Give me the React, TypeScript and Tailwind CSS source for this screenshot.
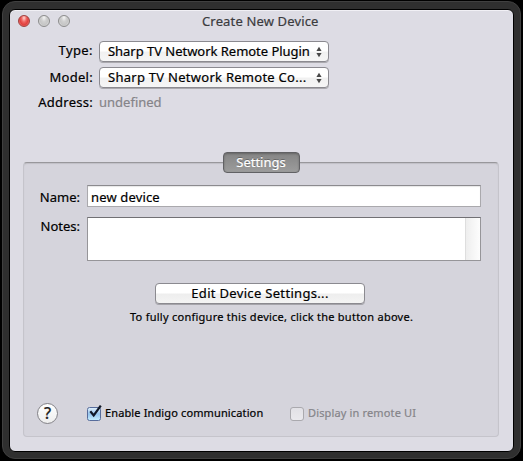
import React from "react";

function Popup({ children }: { children: React.ReactNode }) {
  return (
    <button className="flex h-[21px] w-[230px] items-center justify-between rounded-[4px] border border-[#8b8a90] bg-linear-to-b from-white from-45% via-[#f1f1f1] via-55% to-[#f6f6f6] pr-[6px] pl-2 shadow-[0_1px_0_#aaa9ae]">
      {children}
      <svg width="6" height="12" viewBox="0 0 6 12" fill="#484848">
        <path d="M3 .8 5.6 5H.4zM3 11.2 5.6 7H.4z" />
      </svg>
    </button>
  );
}

function Light({ red = false }: { red?: boolean }) {
  return (
    <span
      className={
        red
          ? "h-3 w-3 rounded-full border border-[#a0413f] bg-[radial-gradient(ellipse_at_50%_20%,#ffd6d2_0%,#ef6561_35%,#e0403e_60%,#ff9c92_100%)]"
          : "h-3 w-3 rounded-full border border-[#8c8c8c] bg-[radial-gradient(ellipse_at_50%_15%,#f5f5f5_0%,#d0d0d0_35%,#c6c6c6_60%,#ececec_100%)]"
      }
    />
  );
}

export default function App() {
  return (
    <div className="h-[461px] w-[523px] overflow-hidden bg-black px-[2px] pt-px pb-[2px] font-['Noto_Sans','Open_Sans',sans-serif] text-[13px] leading-4 whitespace-nowrap text-black [-webkit-text-stroke:0.2px]">
      <div className="h-[458px] w-[519px] rounded-[13px] border border-[#404040] bg-[#2f2f2f] pt-[7px] pl-[6px]">
        <div className="h-[443px] w-[505px] rounded-[6px] border border-black bg-[#dddce4] shadow-[inset_0_1px_0_#f1f0f5]">
          <header className="flex h-[31px] items-start pt-[5px] pl-2">
            <div className="flex w-[176px] gap-2">
              <Light red />
              <Light />
              <Light />
            </div>
            <h1 className="-mt-[2px] pl-[8px] tracking-[0.15px] text-[#3b3b3e]">Create New Device</h1>
          </header>

          <section className="grid h-[111px] grid-cols-[83px_1fr] content-start gap-x-[6px] gap-y-[5px]">
            <div className="text-right leading-[19px] tracking-[0.4px]">Type:</div>
            <Popup><span className="-mt-[2px] tracking-[-0.03px]">Sharp TV Network Remote Plugin</span></Popup>
            <div className="pt-px text-right leading-[19px] tracking-[0.3px]">Model:</div>
            <Popup><span className="-mt-[2px] tracking-[0.27px]">Sharp TV Network Remote Co...</span></Popup>
            <div className="text-right leading-[19px] tracking-[0.25px]">Address:</div>
            <div className="leading-[19px] text-[#858489]">undefined</div>
          </section>

          <main className="ml-[13px] flex h-[285px] w-[476px] flex-col">
            <div className="z-10 -mb-[11px] flex h-[21px] w-[77px] items-center justify-center self-center rounded-[4px] border border-[#616164] bg-linear-to-b from-[#858585] to-[#9c9c9c] pb-px text-white shadow-[inset_0_1px_2px_#666] [text-shadow:0_-1px_0_#666]">
              Settings
            </div>
            <div className="h-[275px] rounded-[4px] border border-[#c5c4cb] border-t-[#98979b] bg-[#d5d4dc] pt-[22px] shadow-[inset_0_1px_1px_#c0bfc6]">
              <div className="flex h-[32px] items-start">
                <label className="w-[56px] pt-[4px] text-right">Name:</label>
                <div className="ml-[7px] h-[22px] w-[394px] border border-[#aaa9ad] border-t-[#8b8a8e] bg-white pt-[3px] pl-[3px] tracking-[0.15px] shadow-[inset_0_1px_1px_#e7e7e7]">new device</div>
              </div>
              <div className="flex h-[66px] items-start">
                <label className="w-[56px] pt-px text-right">Notes:</label>
                <div className="ml-[7px] flex h-[44px] w-[394px] justify-end border border-[#969599] border-t-[#717074] bg-white">
                  <div className="w-[15px] border-l border-[#dedede] bg-linear-to-r from-[#eeeeee] to-[#fdfdfd]" />
                </div>
              </div>
              <button className="ml-[131px] flex h-[21px] w-[210px] items-center justify-center rounded-[4px] border border-[#8b8a90] bg-linear-to-b from-white from-45% via-[#eeeeee] via-55% to-[#f4f4f4] pb-[2px] tracking-[0.32px] shadow-[0_1px_0_#a5a4aa]">
                Edit Device Settings...
              </button>
              <p className="mt-[5px] ml-[106px] text-[11px] tracking-[0.26px]">To fully configure this device, click the button above.</p>
              <div className="mt-[78px] flex h-[21px] items-center pl-[13px] text-[11px]">
                <div className="flex h-[21px] w-[21px] items-center justify-center rounded-full border border-[#848388] bg-linear-to-b from-white to-[#eeeeee] pb-[2px] text-[16px] font-medium text-[#222]">?</div>
                <svg className="ml-[29px]" width="16" height="18" viewBox="0 0 16 18">
                  <defs>
                    <linearGradient id="aqua" x2="0" y2="1">
                      <stop stopColor="#e3f1fc" /><stop offset=".5" stopColor="#95c4ed" /><stop offset="1" stopColor="#c7f0ff" />
                    </linearGradient>
                  </defs>
                  <rect x=".5" y="2.5" width="13" height="13" rx="2" fill="url(#aqua)" stroke="#576c9b" />
                  <path d="M3.3 6.2 6.7 10.5 13.8 .6" fill="none" stroke="#101827" strokeWidth="2.2" />
                </svg>
                <span className="-mt-[2px] ml-[2px] w-[185px] tracking-[0.13px]">Enable Indigo communication</span>
                <span className="h-[14px] w-[14px] rounded-[3px] border border-[#aaa9ae] bg-linear-to-b from-[#e2e1e6] to-[#eae9ed]" />
                <span className="-mt-[2px] ml-1 tracking-[0.15px] text-[#858489]">Display in remote UI</span>
              </div>
            </div>
          </main>
        </div>
      </div>
    </div>
  );
}
